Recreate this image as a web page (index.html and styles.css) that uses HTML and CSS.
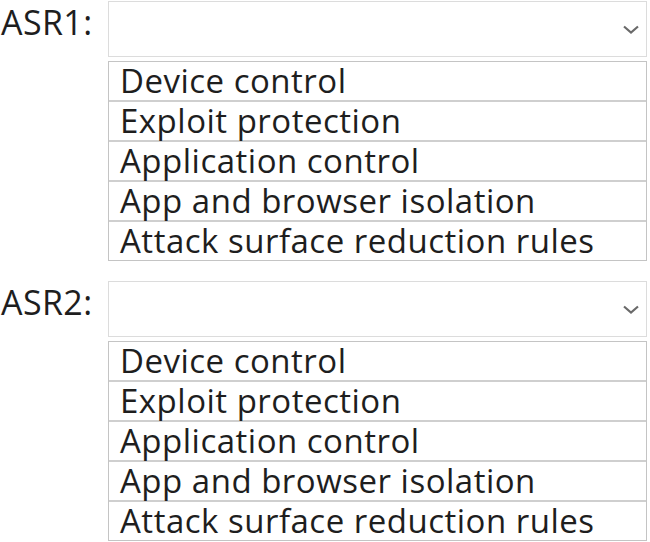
FILE: index.html
```html
<!DOCTYPE html>
<html lang="en">
<head>
    <meta charset="UTF-8" />
    <title>ASR</title>
    <link rel="stylesheet" href="styles.css">
</head>
<body>
    <div class="asr-list">
        <div class="asr-item">
            <div class="asr-label">ASR1:</div>
            <div class="asr-field">
                <div class="select-box">
                    <svg class="chevron" width="18" height="9" viewBox="0 0 18 9">
                        <path d="M2 1.5 L9 7.5 L16 1.5" fill="none" stroke="#6a6a6a" stroke-width="2.2" />
                    </svg>
                </div>
                <ul class="options">
                    <li>Device control</li>
                    <li>Exploit protection</li>
                    <li>Application control</li>
                    <li>App and browser isolation</li>
                    <li>Attack surface reduction rules</li>
                </ul>
            </div>
        </div>

        <div class="asr-item">
            <div class="asr-label">ASR2:</div>
            <div class="asr-field">
                <div class="select-box">
                    <svg class="chevron" width="18" height="9" viewBox="0 0 18 9">
                        <path d="M2 1.5 L9 7.5 L16 1.5" fill="none" stroke="#6a6a6a" stroke-width="2.2" />
                    </svg>
                </div>
                <ul class="options">
                    <li>Device control</li>
                    <li>Exploit protection</li>
                    <li>Application control</li>
                    <li>App and browser isolation</li>
                    <li>Attack surface reduction rules</li>
                </ul>
            </div>
        </div>
    </div>
</body>
</html>
```

FILE: styles.css
```css
* {
    box-sizing: border-box;
    margin: 0;
    padding: 0;
}

body {
    background: #ffffff;
    color: #1e1e1e;
    font-family: "Open Sans", "Noto Sans", sans-serif;
}

.asr-list {
    display: flex;
    flex-direction: column;
    gap: 20px;
    padding-top: 1px;
}

.asr-item {
    display: flex;
}

.asr-label {
    width: 108px;
    padding-left: 1px;
    font-size: 34px;
    line-height: 42px;
    letter-spacing: 0.4px;
}

.asr-field {
    width: 539px;
}

.select-box {
    height: 56px;
    border: 1px solid #dcdcdc;
    display: flex;
    align-items: center;
    justify-content: flex-end;
    padding-right: 6px;
}

.options {
    list-style: none;
    margin-top: 4px;
    border: 1px solid #c4c4c4;
}

.options li {
    height: 40px;
    line-height: 38px;
    padding-left: 11px;
    font-size: 33px;
    letter-spacing: 0.5px;
    border-bottom: 2px solid #cfcfcf;
    white-space: nowrap;
}

.options li:last-child {
    height: 38px;
    border-bottom: none;
}
```
